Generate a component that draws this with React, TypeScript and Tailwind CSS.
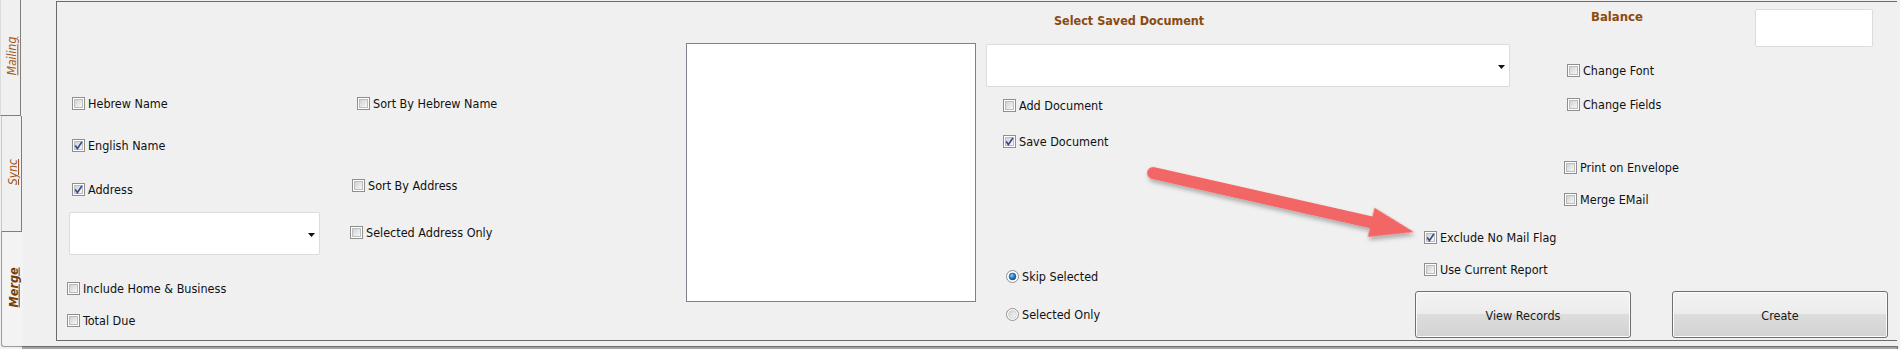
import React from "react";

type RowProps = { label: string; checked?: boolean; className?: string };

function Check({ checked }: { checked?: boolean }) {
    return (
        <span className="relative flex-none w-[13px] h-[13px] border border-[#8e8f8f] bg-white p-[1px]">
            <span className="block w-full h-full border border-[#bdbdbd] bg-linear-to-br from-[#d2d2d2] to-[#f7f7f7]" />
            {checked && (
                <svg className="absolute left-0 top-0" width="11" height="11" viewBox="0 0 11 11">
                    <path d="M2.2 5.6 L4.4 8.6 L8.9 1.9" fill="none" stroke="#34478a" strokeWidth="1.7" />
                </svg>
            )}
        </span>
    );
}

function CheckRow({ label, checked, className = "" }: RowProps) {
    return (
        <div className={`flex items-center h-[13px] gap-[3px] ${className}`}>
            <Check checked={checked} />
            <span className="pt-[2px] text-[12.5px] leading-none text-[#111] whitespace-nowrap">{label}</span>
        </div>
    );
}

function RadioRow({ label, checked, className = "" }: RowProps) {
    return (
        <div className={`flex items-center h-[13px] gap-[3px] ${className}`}>
            <svg width="13" height="13" viewBox="0 0 13 13" className="flex-none">
                <defs>
                    <linearGradient id="radioOff" x1="0" y1="0" x2="1" y2="1">
                        <stop offset="0" stopColor="#d0d0d0" />
                        <stop offset="1" stopColor="#f8f8f8" />
                    </linearGradient>
                    <radialGradient id="radioOn" cx="0.4" cy="0.35" r="0.7">
                        <stop offset="0" stopColor="#8fd0ff" />
                        <stop offset="0.55" stopColor="#2a7cc4" />
                        <stop offset="1" stopColor="#0d3f73" />
                    </radialGradient>
                </defs>
                <circle cx="6.5" cy="6.5" r="6" fill="#fff" stroke="#8e8f8f" />
                {checked ? (
                    <circle cx="6.5" cy="6.5" r="3.4" fill="url(#radioOn)" stroke="#1d4f80" strokeWidth="0.6" />
                ) : (
                    <circle cx="6.5" cy="6.5" r="4" fill="url(#radioOff)" stroke="#c4c4c4" strokeWidth="0.6" />
                )}
            </svg>
            <span className="pt-[2px] text-[12.5px] leading-none text-[#111] whitespace-nowrap">{label}</span>
        </div>
    );
}

function Combo({ className = "" }: { className?: string }) {
    return (
        <div className={`flex items-center justify-end pr-[4px] pt-[2px] bg-white border border-[#dcdcdc] rounded-[2px] ${className}`}>
            <svg width="7" height="4" viewBox="0 0 7 4">
                <polygon points="0,0 7,0 3.5,4" fill="#111" />
            </svg>
        </div>
    );
}

function Btn({ label }: { label: string }) {
    return (
        <div className="w-[216px] h-[47px] flex-none flex items-center justify-center pt-[3px] rounded-[3px] border border-[#707070] shadow-[inset_0_0_0_1px_#fbfbfb] bg-[linear-gradient(#f3f3f3_0%,#ececec_50%,#dddddd_50%,#d2d2d2_100%)] text-[12.5px] text-[#1a1a1a]">
            {label}
        </div>
    );
}

function Tab({ label, active, className = "" }: { label: string; active?: boolean; className?: string }) {
    return (
        <div className={`flex items-center justify-center pb-[4px] pl-[3px] ${className}`}>
            <span
                className={`-rotate-90 whitespace-nowrap italic underline ${active ? "text-[12.5px] font-bold text-[#7a3c05]" : "text-[12px] text-[#a0571d]"}`}
            >
                {label}
            </span>
        </div>
    );
}

export default function App() {
    return (
        <div className="relative flex w-[1900px] h-[349px] overflow-hidden bg-[#f0f0f0] font-['DejaVu_Sans_Condensed','Liberation_Sans',sans-serif]">
            {/* tabs */}
            <div className="w-[22px] flex-none flex flex-col">
                <Tab label="Mailing" className="h-[116px] w-[21px] border-l border-l-[#dcdcdc] border-r border-b border-[#7e7e7e]" />
                <Tab label="Sync" className="h-[116px] w-[21px] ml-[1px] border-l border-l-[#c8c8c8] border-r border-b border-[#7e7e7e]" />
                <Tab label="Merge" active className="h-[115px] w-[22px] ml-[1px] border-l border-b border-[#9a9a9a] rounded-bl-[3px] bg-[#f3f3f3]" />
            </div>

            <div className="flex-1 flex flex-col">
                <div className="ml-[34px] mr-[3px] mt-[1px] h-[340px] flex-none flex border-l border-t border-b border-[#6b6b6b]">
                    {/* names / address */}
                    <div className="w-[263px] flex-none flex flex-col pt-[95px] pl-[10px]">
                        <CheckRow label="Hebrew Name" className="ml-[5px]" />
                        <CheckRow label="English Name" checked className="ml-[5px] mt-[29px]" />
                        <CheckRow label="Address" checked className="ml-[5px] mt-[31px]" />
                        <Combo className="ml-[2px] mt-[16px] w-[251px] h-[43px]" />
                        <CheckRow label="Include Home & Business" className="mt-[27px]" />
                        <CheckRow label="Total Due" className="mt-[19px]" />
                    </div>

                    {/* sorting */}
                    <div className="w-[280px] flex-none flex flex-col pt-[95px] pl-[30px]">
                        <CheckRow label="Sort By Hebrew Name" className="ml-[7px]" />
                        <CheckRow label="Sort By Address" className="ml-[2px] mt-[69px]" />
                        <CheckRow label="Selected Address Only" className="mt-[34px]" />
                    </div>

                    {/* list */}
                    <div className="ml-[86px] mt-[41px] w-[290px] h-[259px] flex-none bg-white border border-[#7d828a]" />

                    {/* document / options */}
                    <div className="ml-[10px] flex-1 flex flex-col">
                        <div className="h-[204px] flex-none flex">
                            <div className="w-[524px] flex-none flex flex-col pt-[11px]">
                                <div className="ml-[68px] h-[16px] leading-[16px] text-[12.5px] font-bold text-[#8b4a0f] whitespace-nowrap">
                                    Select Saved Document
                                </div>
                                <Combo className="mt-[15px] w-full h-[43px]" />
                                <CheckRow label="Add Document" className="ml-[17px] mt-[12px]" />
                                <CheckRow label="Save Document" checked className="ml-[17px] mt-[23px]" />
                            </div>
                            <div className="ml-[54px] flex flex-col pt-[7px]">
                                <div className="flex h-[38px]">
                                    <div className="w-[191px] pl-[27px] h-[16px] leading-[16px] text-[13px] font-bold text-[#8b4a0f]">
                                        Balance
                                    </div>
                                    <div className="w-[118px] h-[38px] bg-white border border-[#dcdcdc] rounded-[2px]" />
                                </div>
                                <CheckRow label="Change Font" className="ml-[3px] mt-[17px]" />
                                <CheckRow label="Change Fields" className="ml-[3px] mt-[21px]" />
                                <CheckRow label="Print on Envelope" className="mt-[50px]" />
                                <CheckRow label="Merge EMail" className="mt-[19px]" />
                            </div>
                        </div>
                        <div className="flex">
                            <div className="w-[429px] flex-none flex flex-col pl-[20px]">
                                <RadioRow label="Skip Selected" checked className="mt-[64px]" />
                                <RadioRow label="Selected Only" className="mt-[25px]" />
                            </div>
                            <div className="flex flex-col">
                                <CheckRow label="Exclude No Mail Flag" checked className="ml-[9px] mt-[25px]" />
                                <CheckRow label="Use Current Report" className="ml-[9px] mt-[19px]" />
                                <div className="flex mt-[15px] gap-[41px]">
                                    <Btn label="View Records" />
                                    <Btn label="Create" />
                                </div>
                            </div>
                        </div>
                    </div>
                </div>
                <div className="mt-[5px] mr-[2px] h-[3px] flex-none bg-[#a3a3a3] border-t border-r border-[#6f6f6f]" />
            </div>

            {/* annotation arrow */}
            <svg className="absolute left-0 top-0 pointer-events-none" width="1900" height="349">
                <defs>
                    <filter id="arrowShadow" x="-10%" y="-50%" width="120%" height="200%">
                        <feDropShadow dx="2" dy="3" stdDeviation="2" floodColor="#000" floodOpacity="0.28" />
                    </filter>
                </defs>
                <g transform="translate(1153 173) rotate(12.74)" filter="url(#arrowShadow)">
                    <path d="M0,-6 L223.6,-6 L223.6,-15 L267.6,0 L223.6,15 L223.6,6 L0,6 A6,6 0 0 1 0,-6 Z" fill="#f26666" />
                </g>
            </svg>
        </div>
    );
}
